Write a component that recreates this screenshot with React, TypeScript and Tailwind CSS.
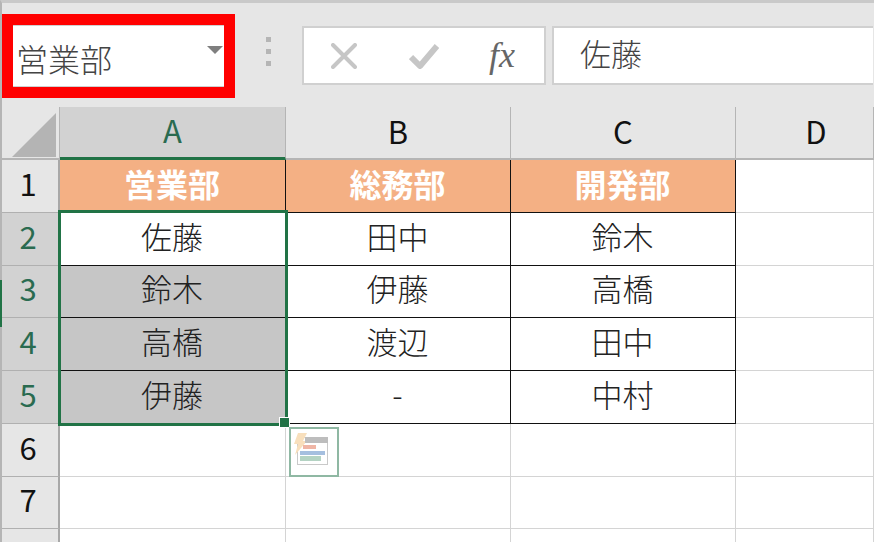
const FONT = "font-['Noto_Sans_CJK_JP','Noto_Sans',sans-serif]";

const rows = [
  ["営業部", "総務部", "開発部", ""],
  ["佐藤", "田中", "鈴木", ""],
  ["鈴木", "伊藤", "高橋", ""],
  ["高橋", "渡辺", "田中", ""],
  ["伊藤", "-", "中村", ""],
  ["", "", "", ""],
  ["", "", "", ""],
  ["", "", "", ""],
];

const ColHead = ({ label, active, wide }: { label: string; active?: boolean; wide?: boolean }) => (
  <div
    className={[
      "flex items-center justify-center border-r border-[#b5b5b5] pb-[3px]",
      active
        ? "border-b-[3px] border-b-[#217346] bg-[#d2d2d2] text-[#2a6b50]"
        : "border-b-2 border-b-[#b5b5b5] text-[#111]",
      wide ? "pl-[23px]" : "",
    ].join(" ")}
  >
    {label}
  </div>
);

const NameBox = () => (
  <div className="mt-[11px] h-[84px] w-[233px] border-[11px] border-[#ff0000] bg-white">
    <div className="flex h-full items-center justify-between border-y border-[#d0d0d0] pl-[3px] pr-[1px] text-[#444]">
      <span className="mt-[4px] text-[32px] font-light">営業部</span>
      <svg width="16" height="8" viewBox="0 0 16 8" className="mb-[12px]">
        <path d="M0 0h16L8 8z" fill="#7f7f7f" />
      </svg>
    </div>
  </div>
);

const FormulaButtons = () => (
  <div className="flex h-[59px] w-[244px] items-center border-2 border-[#d0d0d0] bg-white">
    <svg width="26" height="26" viewBox="0 0 26 26" className="ml-[27px]">
      <path d="M2 2 24 24M24 2 2 24" stroke="#c6c6c6" strokeWidth="4" strokeLinecap="round" />
    </svg>
    <svg width="30" height="26" viewBox="0 0 30 26" className="ml-[52px]">
      <path d="M2 14 11 23 28 3" fill="none" stroke="#c6c6c6" strokeWidth="6" strokeLinejoin="round" />
    </svg>
    <span className="ml-[50px] mt-[-2px] font-['Liberation_Serif',serif] text-[36px] italic leading-none text-[#666]">
      fx
    </span>
  </div>
);

const QuickAnalysis = () => (
  <div className="absolute left-[289px] top-[427px] h-[50px] w-[50px] border-[2px] border-[#8fb8a3] bg-white">
    <svg width="46" height="46" viewBox="0 0 46 46">
      <rect x="6.5" y="8.5" width="30" height="27" fill="#fff" stroke="#c9c9c9" />
      <path d="M7 4h9l-4 8h4L4 26l3-11H3z" fill="#f8dfbc" />
      <rect x="14" y="8" width="23" height="6" fill="#bdbdbd" />
      <rect x="12" y="16" width="13" height="4" fill="#efb5a5" />
      <rect x="9" y="22" width="25" height="4" fill="#a5bfdf" />
      <rect x="9" y="27" width="21" height="5" fill="#b4d3c3" />
    </svg>
  </div>
);

export default function App() {
  return (
    <div className={`relative h-[542px] w-[896px] overflow-hidden bg-white text-[31px] ${FONT}`}>
      <div className="h-full w-[874px] border-l-2 border-t-[3px] border-l-[#b5b5b5] border-t-[#c9c9c9]">
        <div className="flex h-[104px] bg-[#e6e6e6]">
          <NameBox />
          <div className="ml-[31px] mt-[34px] flex flex-col gap-[7px]">
            <div className="h-[5px] w-[5px] bg-[#b5b5b5]" />
            <div className="h-[5px] w-[5px] bg-[#b5b5b5]" />
            <div className="h-[5px] w-[5px] bg-[#b5b5b5]" />
          </div>
          <div className="ml-[31px] mt-[23px] flex gap-[6px]">
            <FormulaButtons />
            <div className="flex h-[59px] w-[321px] items-center border-y-2 border-l-2 border-[#d0d0d0] bg-white pb-[4px] pl-[26px] font-light text-[#444]">
              佐藤
            </div>
          </div>
        </div>

        <div className="grid grid-cols-[58px_226px_225px_225px_138px] grid-rows-[53px_53px_53px_52px_53px_53px_53px_52px_53px] bg-white">
          <div className="relative border-b-2 border-r border-b-[#b5b5b5] border-r-[#b5b5b5] bg-[#e6e6e6]">
            <svg width="44" height="44" viewBox="0 0 44 44" className="absolute bottom-[1px] right-[3px]">
              <path d="M44 0V44H0z" fill="#b4b4b4" />
            </svg>
          </div>
          <div className="col-span-4 grid grid-cols-[226px_225px_225px_138px] bg-[#e6e6e6]">
            <ColHead label="A" active />
            <ColHead label="B" />
            <ColHead label="C" />
            <ColHead label="D" wide />
          </div>

          {rows.map((r, i) => (
            <div key={i} className="contents">
              <div
                className={
                  i >= 1 && i <= 4
                    ? "flex items-center justify-center border-b border-r-2 border-b-[#b0b0b0] border-r-[#a8a8a8] bg-[#d2d2d2] pb-[6px] pr-[4px] text-[#2a6b50]"
                    : "flex items-center justify-center border-b border-r-2 border-b-[#b0b0b0] border-r-[#a8a8a8] bg-[#e6e6e6] pb-[6px] pr-[4px] text-[#111]"
                }
              >
                {i + 1}
              </div>
              {r.map((text, j) => {
                const inTable = i <= 4 && j <= 2;
                const header = i === 0 && j <= 2;
                const selected = j === 0 && i >= 2 && i <= 4;
                return (
                  <div
                    key={j}
                    className={[
                      "flex items-center justify-center border-b border-r pb-[6px] pr-[1px]",
                      inTable ? "border-[#111]" : "border-[#d4d4d4]",
                      header ? "bg-[#f4b084] text-[32px] font-bold text-white" : "font-light text-[#222]",
                      selected ? "bg-[#c6c6c6]" : "",
                    ].join(" ")}
                  >
                    {text}
                  </div>
                );
              })}
            </div>
          ))}
        </div>
      </div>

      {/* selection outline and fill handle sit over the cells */}
      <div className="pointer-events-none absolute left-[58px] top-[210px] h-[216px] w-[230px] border-[3px] border-[#217346]" />
      <div className="absolute left-[279px] top-[417px] h-[11px] w-[11px] border border-white bg-[#217346]" />
      <div className="absolute left-0 top-[280px] h-[47px] w-[2px] bg-[#217346]" />
      <QuickAnalysis />
    </div>
  );
}
